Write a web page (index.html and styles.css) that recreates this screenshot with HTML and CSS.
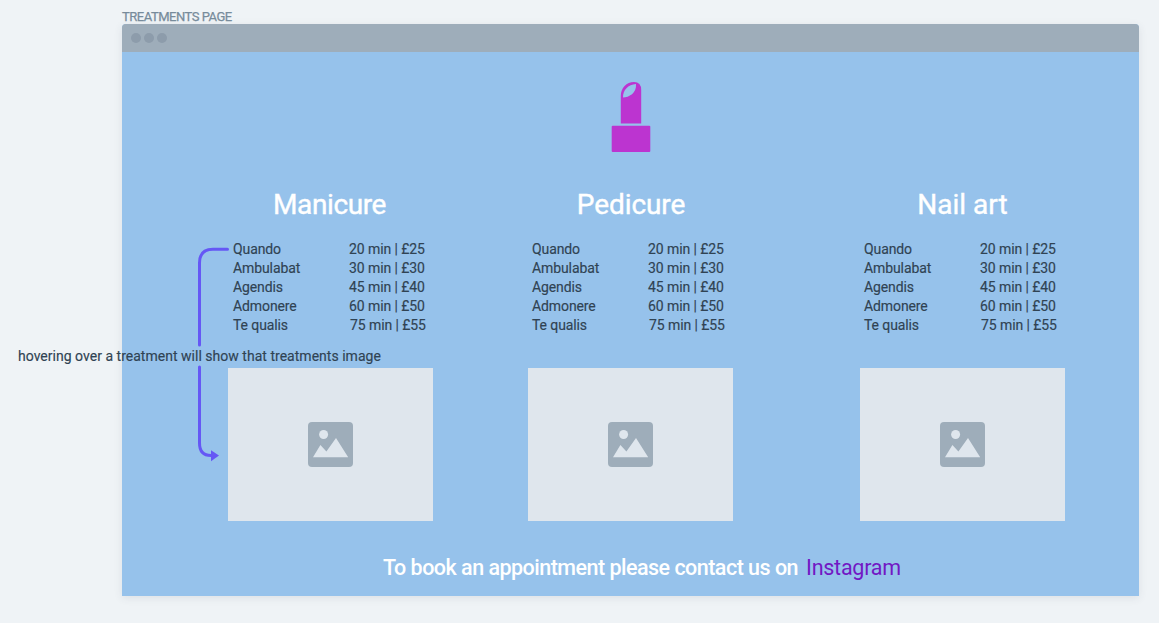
FILE: index.html
```html
<!DOCTYPE html>
<html lang="en">
<head>
<meta charset="utf-8">
<title>Treatments page</title>
<link rel="stylesheet" href="styles.css">
</head>
<body>
<svg class="defs" width="0" height="0" aria-hidden="true">
  <symbol id="picture" viewBox="0 0 45 45">
    <rect width="45" height="45" rx="4" fill="#9eadba"/>
    <circle cx="15.6" cy="12.5" r="4.5" fill="#dfe6ed"/>
    <path d="M5 35.2L12.4 23L18.4 29.6L28 16L40.2 35.2Z" fill="#dfe6ed"/>
  </symbol>
</svg>
<div class="board">
  <div class="frame-label">TREATMENTS PAGE</div>
  <main class="window">
    <div class="titlebar"><i class="dot"></i><i class="dot"></i><i class="dot"></i></div>
    <div class="page">
      <svg class="lipstick" width="40" height="72" viewBox="0 0 40 72">
        <path d="M9.800 42.500V15C9.800 7 15.500 1 23 1Q30.200 1 30.200 9V42.500ZM12 16.500C18 16.500 25.800 12 25 3C17 3.500 12 9 12 16.500Z" fill="#bc34d0" fill-rule="evenodd"/>
        <rect x="0.700" y="44.800" width="38.600" height="26.300" rx="1" fill="#bc34d0"/>
      </svg>
      <div class="columns">
        <section class="column">
          <h2 class="manicure">Manicure</h2>
          <ul class="list">
            <li><span class="name">Quando</span><span class="price">20 min | £25</span></li>
            <li><span class="name">Ambulabat</span><span class="price">30 min | £30</span></li>
            <li><span class="name">Agendis</span><span class="price">45 min | £40</span></li>
            <li><span class="name">Admonere</span><span class="price">60 min | £50</span></li>
            <li><span class="name">Te qualis</span><span class="price last">75 min | £55</span></li>
          </ul>
          <div class="image"><svg width="45" height="45"><use href="#picture"/></svg></div>
        </section>
        <section class="column second">
          <h2 class="pedicure">Pedicure</h2>
          <ul class="list">
            <li><span class="name">Quando</span><span class="price">20 min | £25</span></li>
            <li><span class="name">Ambulabat</span><span class="price">30 min | £30</span></li>
            <li><span class="name">Agendis</span><span class="price">45 min | £40</span></li>
            <li><span class="name">Admonere</span><span class="price">60 min | £50</span></li>
            <li><span class="name">Te qualis</span><span class="price last">75 min | £55</span></li>
          </ul>
          <div class="image"><svg width="45" height="45"><use href="#picture"/></svg></div>
        </section>
        <section class="column third">
          <h2 class="nail">Nail art</h2>
          <ul class="list">
            <li><span class="name">Quando</span><span class="price">20 min | £25</span></li>
            <li><span class="name">Ambulabat</span><span class="price">30 min | £30</span></li>
            <li><span class="name">Agendis</span><span class="price">45 min | £40</span></li>
            <li><span class="name">Admonere</span><span class="price">60 min | £50</span></li>
            <li><span class="name">Te qualis</span><span class="price last">75 min | £55</span></li>
          </ul>
          <div class="image"><svg width="45" height="45"><use href="#picture"/></svg></div>
        </section>
      </div>
      <footer class="contact"><span class="message">To book an appointment please contact us on</span><a class="link">Instagram</a></footer>
    </div>
  </main>
  <svg class="connector" width="40" height="230" viewBox="0 0 40 230" fill="none">
    <path d="M35.500 9.300H21Q7.500 9.300 7.500 23V105M7.500 127V203Q7.500 215.500 19 215.500" stroke="#6557f5" stroke-width="3" stroke-linecap="round"/>
    <path d="M19 210.300L27 215.500L19 221.300Z" fill="#6557f5"/>
  </svg>
  <p class="note">hovering over a treatment will show that treatments image</p>
</div>
</body>
</html>
```
FILE: styles.css
```css
* { box-sizing: border-box; }
body {
  margin: 0;
  background: #eff3f6;
  font-family: Roboto, "Liberation Sans", sans-serif;
  color: #304353;
}
.defs { position: absolute; }
.board {
  position: relative;
  width: 1159px;
  height: 623px;
  padding: 9px 20px 0 122px;
  overflow: hidden;
}
.frame-label {
  height: 15px;
  font-size: 13px;
  line-height: 16px;
  letter-spacing: -0.48px;
  color: #778b9b;
  -webkit-text-stroke: 0.25px #778b9b;
  white-space: nowrap;
}
.window {
  width: 1017px;
  height: 572px;
  border-radius: 4px 4px 0 0;
  background: #96c2eb;
  box-shadow: 0 2px 8px rgba(60, 70, 90, 0.1);
}
.titlebar {
  display: flex;
  align-items: center;
  gap: 3px;
  height: 28px;
  padding-left: 9px;
  border-radius: 4px 4px 0 0;
  background: #9eadba;
}
.dot {
  width: 10px;
  height: 10px;
  border-radius: 50%;
  background: #8d9cab;
}
.page {
  display: flex;
  flex-direction: column;
  height: 544px;
  padding-top: 29px;
}
.lipstick { display: block; margin-left: 489px; }
.columns { display: flex; padding: 34px 0 0 106px; }
.column { width: 205px; }
.second { margin-left: 95px; }
.third { margin-left: 127px; }
h2 {
  margin: 0;
  height: 53px;
  font-size: 28px;
  line-height: 36px;
  font-weight: 400;
  text-align: center;
  color: #fff;
  -webkit-text-stroke: 0.4px #fff;
}
.manicure { padding-right: 2px; letter-spacing: -0.4px; }
.pedicure { padding-left: 1px; letter-spacing: -0.1px; }
.list {
  height: 128px;
  margin: 0;
  padding: 0 0 0 5px;
  list-style: none;
  font-size: 14px;
  line-height: 19px;
  -webkit-text-stroke: 0.15px #304353;
  white-space: nowrap;
}
.second .list, .third .list { padding-left: 4px; }
.list li { display: flex; }
.name { width: 116px; letter-spacing: -0.1px; }
.price { letter-spacing: -0.08px; }
.last { padding-left: 1px; }
.image {
  display: flex;
  align-items: center;
  justify-content: center;
  height: 153px;
  background: #dfe6ed;
}
.contact {
  display: flex;
  gap: 8px;
  padding: 32px 0 0 261px;
  font-size: 21.5px;
  line-height: 30px;
  white-space: nowrap;
}
.message { color: #fff; font-weight: 500; letter-spacing: -0.52px; }
.link { color: #7218c4; letter-spacing: -0.25px; }
.connector { position: absolute; left: 192px; top: 240px; }
.note {
  position: absolute;
  left: 18px;
  top: 347px;
  margin: 0;
  font-size: 14px;
  line-height: 19px;
  letter-spacing: 0.02px;
  -webkit-text-stroke: 0.15px #304353;
  white-space: nowrap;
}
```
